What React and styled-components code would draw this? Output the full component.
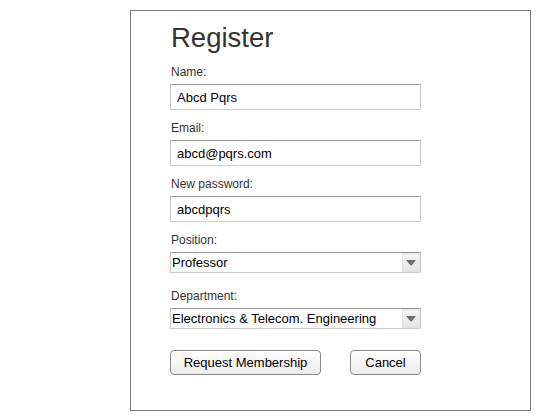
import React, { Component } from 'react';
import styled, { createGlobalStyle } from 'styled-components';

const GlobalStyle = createGlobalStyle`
    body {
        margin: 0;
        background: #fff;
        font-family: "Liberation Sans", Arial, sans-serif;
    }
`;

const Panel = styled.div`
    box-sizing: border-box;
    width: 401px;
    height: 401px;
    margin: 10px 0 0 130px;
    border: 1px solid #7a7a7a;
    padding: 12px 0 0 39px;
`;

const Title = styled.h1`
    margin: 0 0 12px 1px;
    font-size: 27.5px;
    line-height: 30px;
    font-weight: normal;
    color: #333;
`;

const Form = styled.form`
    width: 251px;
    display: flex;
    flex-direction: column;
`;

const Field = styled.div`
    height: 56px;
    display: flex;
    flex-direction: column;
`;

const Label = styled.label`
    font-size: 12px;
    line-height: 15px;
    color: #333;
    margin: 0 0 4px 1px;
`;

const TextInput = styled.input`
    box-sizing: border-box;
    width: 100%;
    height: 26px;
    margin: 0;
    padding: 0 6px;
    border: 1px solid #ccc;
    border-top-color: #999;
    font-family: inherit;
    font-size: 13px;
    color: #000;
    outline: none;
`;

const SelectWrap = styled.div`
    position: relative;
    width: 100%;
    height: 21px;
`;

const Select = styled.select`
    box-sizing: border-box;
    width: 100%;
    height: 21px;
    margin: 0;
    padding: 0 0 0 1px;
    border: 1px solid #ccc;
    border-top-color: #999;
    border-radius: 0;
    background: #fff;
    appearance: none;
    font-family: inherit;
    font-size: 13px;
    color: #000;
    outline: none;
`;

const ArrowBox = styled.span`
    position: absolute;
    top: 1px;
    right: 1px;
    bottom: 1px;
    width: 18px;
    box-sizing: border-box;
    border: 1px solid #e2e2e2;
    background: linear-gradient(#f5f5f5, #e4e4e4);
    display: flex;
    align-items: center;
    justify-content: center;
    pointer-events: none;

    &::after {
        content: '';
        width: 0;
        height: 0;
        border-left: 5px solid transparent;
        border-right: 5px solid transparent;
        border-top: 6px solid #6e6e6e;
    }
`;

const ButtonRow = styled.div`
    margin-top: 5px;
    display: flex;
    justify-content: space-between;
`;

const Button = styled.button`
    width: ${props => props.width}px;
    height: 25px;
    padding: 0;
    border: 1px solid #8a8a8a;
    border-radius: 4px;
    background: linear-gradient(#ffffff, #ececec);
    font-family: inherit;
    font-size: 13px;
    color: #000;
`;

class App extends Component {
    state = {
        name: 'Abcd Pqrs',
        email: 'abcd@pqrs.com',
        password: 'abcdpqrs',
        position: 'Professor',
        department: 'Electronics & Telecom. Engineering'
    }

    handleChange = field => event => {
        this.setState({ [field]: event.target.value });
    };

    render() {
        return (
            <>
                <GlobalStyle />
                <Panel>
                    <Title>Register</Title>
                    <Form onSubmit={e => e.preventDefault()}>
                        <Field>
                            <Label>Name:</Label>
                            <TextInput value={this.state.name} onChange={this.handleChange('name')} />
                        </Field>
                        <Field>
                            <Label>Email:</Label>
                            <TextInput value={this.state.email} onChange={this.handleChange('email')} />
                        </Field>
                        <Field>
                            <Label>New password:</Label>
                            <TextInput value={this.state.password} onChange={this.handleChange('password')} />
                        </Field>
                        <Field>
                            <Label>Position:</Label>
                            <SelectWrap>
                                <Select value={this.state.position} onChange={this.handleChange('position')}>
                                    <option>Professor</option>
                                    <option>Associate Professor</option>
                                    <option>Assistant Professor</option>
                                </Select>
                                <ArrowBox />
                            </SelectWrap>
                        </Field>
                        <Field>
                            <Label>Department:</Label>
                            <SelectWrap>
                                <Select value={this.state.department} onChange={this.handleChange('department')}>
                                    <option>Electronics & Telecom. Engineering</option>
                                    <option>Computer Engineering</option>
                                    <option>Mechanical Engineering</option>
                                </Select>
                                <ArrowBox />
                            </SelectWrap>
                        </Field>
                        <ButtonRow>
                            <Button type="submit" width={151}>Request Membership</Button>
                            <Button type="button" width={71}>Cancel</Button>
                        </ButtonRow>
                    </Form>
                </Panel>
            </>
        );
    }
}

export default App;
